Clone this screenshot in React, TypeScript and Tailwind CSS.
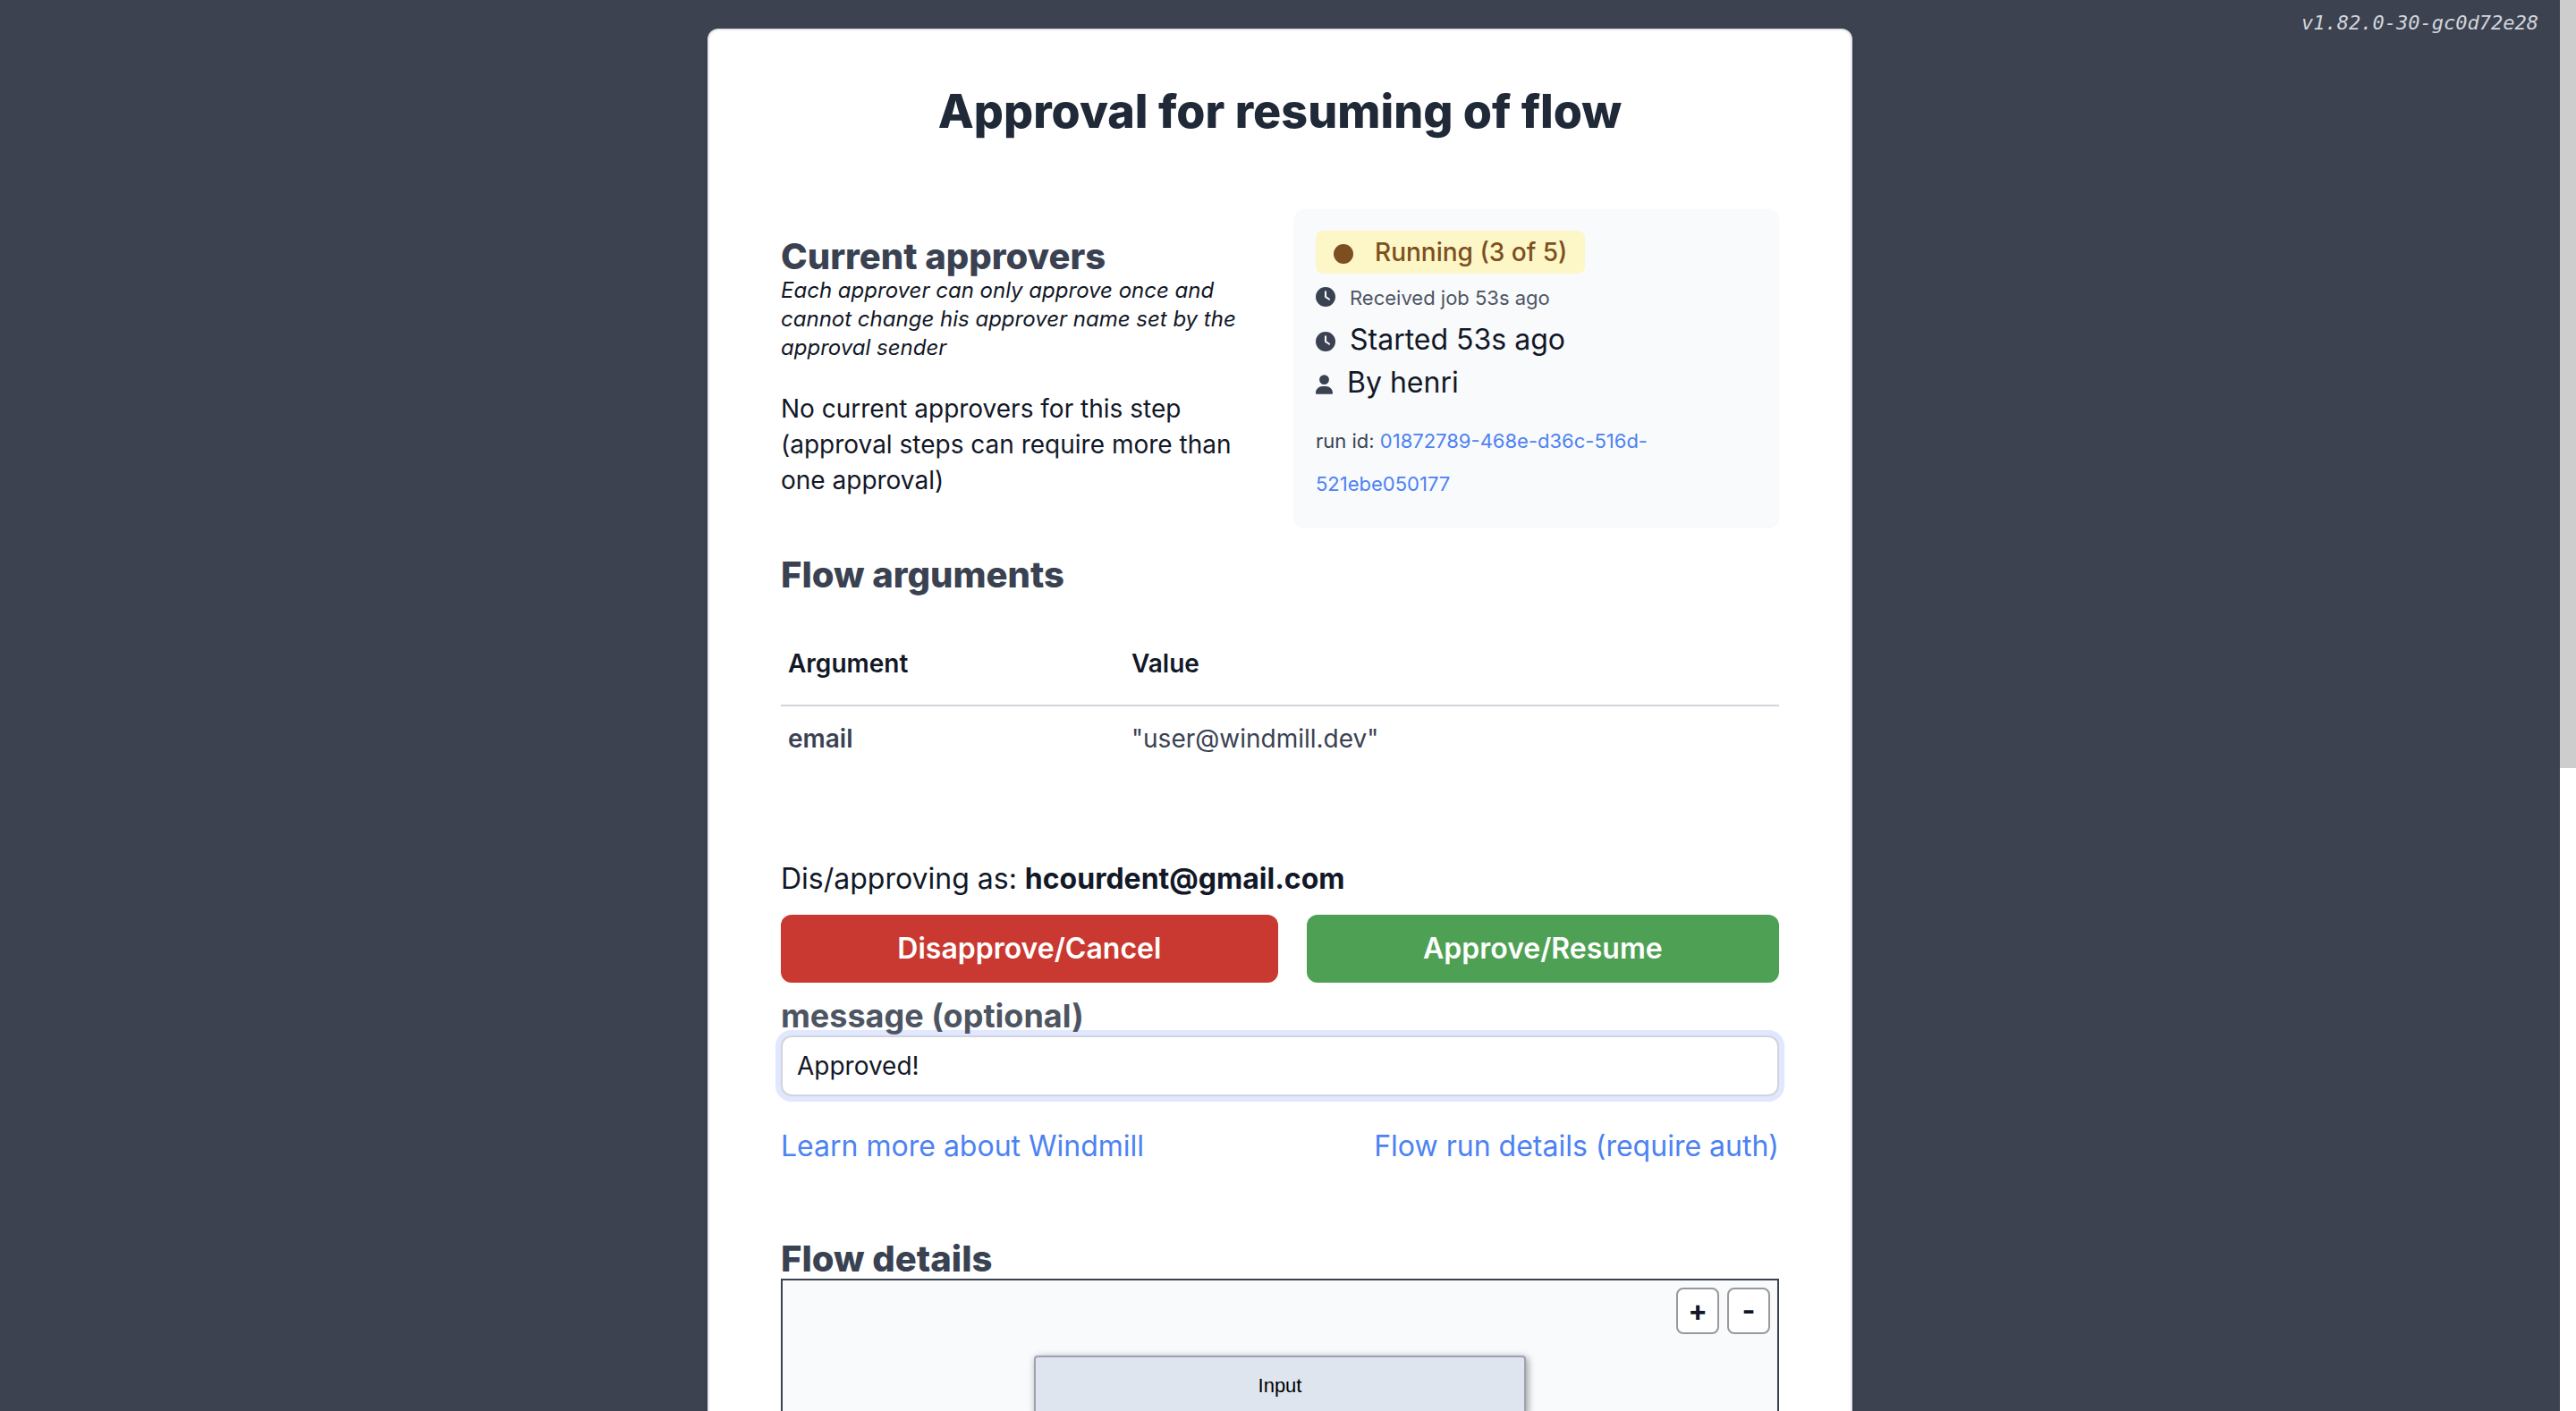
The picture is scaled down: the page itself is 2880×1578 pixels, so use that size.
import { useState, type ReactNode } from 'react';
import { FaCircle, FaClock, FaUser } from 'react-icons/fa6';

function SectionTitle({ children }: { children: ReactNode }) {
  return <h2 className="text-[40px] leading-[44px] font-extrabold text-[#3a4252]">{children}</h2>;
}

function JobStatus() {
  return (
    <div className="rounded-xl bg-[#f9fafc] px-6 pt-6 pb-6 shadow-xs">
      <div className="w-fit rounded-lg bg-[#fdf7c7] px-5 text-[28px] leading-[48px] font-medium text-[#7d4f20]">
        <FaCircle className="mr-6 inline size-[22px] align-[-3px]" />
        Running (3 of 5)
      </div>
      <p className="pt-1 text-[22px] leading-[46px] text-[#4d5563]">
        <FaClock className="mr-4 inline size-[22px] align-[-2px] text-[#3a4252]" />
        Received job 53s ago
      </p>
      <p className="text-[32px] leading-[48px]">
        <FaClock className="mr-4 inline size-[22px] align-[-2px] text-[#3a4252]" />
        Started 53s ago
      </p>
      <p className="text-[32px] leading-[48px]">
        <FaUser className="mr-4 inline h-[22px] w-[19px] align-[-2px] text-[#3a4252]" />
        By henri
      </p>
      <p className="mt-[17px] text-[22px] leading-[48px] text-[#3a4252]">
        run id:{' '}
        <a href="#run" className="text-[#4d82f3]">
          01872789-468e-d36c-516d-521ebe050177
        </a>
      </p>
    </div>
  );
}

function ArgumentsTable() {
  return (
    <table className="mt-[31px] w-full border-collapse text-left text-[28px]">
      <thead>
        <tr className="border-b-2 border-[#d1d5db] leading-[44px]">
          <th className="w-96 px-2 py-6 font-semibold">Argument</th>
          <th className="px-2 py-6 font-semibold">Value</th>
        </tr>
      </thead>
      <tbody>
        <tr className="leading-[40px] text-[#3a4252]">
          <th scope="row" className="px-2 py-4 font-semibold">email</th>
          <td className="px-2 py-4">"user@windmill.dev"</td>
        </tr>
      </tbody>
    </table>
  );
}

function FlowGraph() {
  return (
    <div className="relative border-2 border-[#3a4252] bg-[#f9fafc] pt-[84px] pb-40">
      <div className="absolute top-2 right-2 flex gap-[9px]">
        <button aria-label="Zoom in" className="h-[52px] w-12 rounded-lg border-2 border-[#999999] bg-white text-[32px] leading-[48px] font-bold">
          +
        </button>
        <button aria-label="Zoom out" className="h-[52px] w-12 rounded-lg border-2 border-[#999999] bg-white text-[32px] leading-[48px] font-bold">
          -
        </button>
      </div>
      <div className="mx-auto w-[550px] rounded-sm border-2 border-[#9ca3af] bg-[#dfe5ee] text-center font-['Liberation_Sans',sans-serif] text-[22px] leading-[64px] text-black shadow-[2px_2px_8px_rgba(0,0,0,0.4)]">
        Input
      </div>
    </div>
  );
}

export default function App() {
  const [message, setMessage] = useState('Approved!');

  return (
    <div className="flex h-screen overflow-hidden bg-[#3d4251] font-['Inter',sans-serif] text-[#121827]">
      <div className="relative min-w-0 flex-1">
        <span className="absolute top-2.5 right-6 font-['DejaVu_Sans_Mono',monospace] text-[22px] leading-[32px] text-[#d1d5db] italic">
          v1.82.0-30-gc0d72e28
        </span>

        <main className="mx-auto mt-8 w-full max-w-7xl rounded-xl border-2 border-[#e5e7eb] bg-white px-20 pt-[60px] pb-20 shadow-md">
          <h1 className="text-center text-[52px] leading-[62px] font-extrabold text-[#202937]">
            Approval for resuming of flow
          </h1>

          <div className="mt-[78px] grid grid-cols-2 gap-8">
            <section className="pt-[31px]">
              <SectionTitle>Current approvers</SectionTitle>
              <p className="text-[24px] leading-[32px] italic">
                Each approver can only approve once and cannot change his approver name set by the approval sender
              </p>
              <p className="mt-8 text-[28px] leading-[40px]">
                No current approvers for this step (approval steps can require more than one approval)
              </p>
            </section>
            <JobStatus />
          </div>

          <section className="mt-8">
            <SectionTitle>Flow arguments</SectionTitle>
            <ArgumentsTable />
          </section>

          <p className="mt-[97px] text-[32px] leading-[48px]">
            Dis/approving as: <b className="font-bold">hcourdent@gmail.com</b>
          </p>

          <div className="mt-4 flex gap-8 text-[32px] leading-[48px] font-semibold text-white">
            <button className="h-[76px] grow rounded-xl bg-[#ca3931]">Disapprove/Cancel</button>
            <button className="h-[76px] grow rounded-xl bg-[#4ea154]">Approve/Resume</button>
          </div>

          <label htmlFor="message" className="mt-[15px] block text-[36px] leading-[44px] font-bold text-[#4d5563]">
            message (optional)
          </label>
          <input
            id="message"
            type="text"
            value={message}
            onChange={(e) => setMessage(e.target.value)}
            className="block h-[68px] w-full rounded-xl border-2 border-[#d1d5db] bg-white px-4 text-[28px] ring-6 ring-[#e0e7ff] outline-none"
          />

          <div className="mt-8 flex justify-between text-[32px] leading-[48px] text-[#4d82f3]">
            <a href="#learn">Learn more about Windmill</a>
            <a href="#details">Flow run details (require auth)</a>
          </div>

          <section className="mt-20">
            <SectionTitle>Flow details</SectionTitle>
            <FlowGraph />
          </section>
        </main>
      </div>

      <div aria-hidden="true" className="w-[18px] shrink-0 bg-white">
        <div className="h-[859px] bg-[#cdcdcd]" />
      </div>
    </div>
  );
}
